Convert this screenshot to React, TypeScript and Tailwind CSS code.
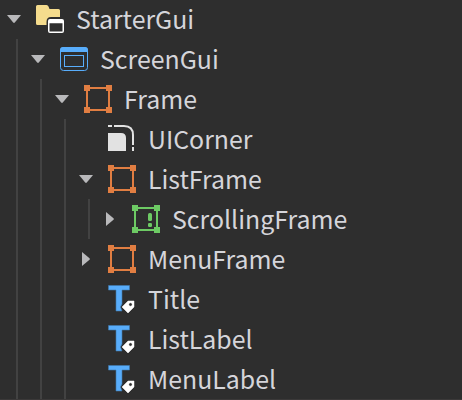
import type { ReactNode } from "react";

const FolderIcon = () => (
  <svg width="28" height="28" viewBox="0 0 28 28">
    <path d="M1.5 0H10.5Q12 0 12.5 1.5L13.5 4H22.5Q24 4 24 5.5V12H15Q10.5 12 10.5 17V20H1.5Q0 20 0 18.5V1.5Q0 0 1.5 0Z" fill="#f5dc8d" />
    <path fillRule="evenodd" d="M14 14H26Q28 14 28 16V26Q28 28 26 28H14Q12 28 12 26V16Q12 14 14 14ZM13.5 18.2V26.5H26.5V18.2Z" fill="#fff" />
  </svg>
);

const ScreenIcon = () => (
  <svg width="28" height="24" viewBox="0 0 28 24">
    <rect x=".5" y=".5" width="27" height="23" rx="3" fill="none" stroke="#58adfb" />
    <path d="M0 5V3Q0 0 3 0H25Q28 0 28 3V5Z" fill="#58adfb" />
    <rect x="4.5" y="8.5" width="19" height="11" fill="none" stroke="#58adfb" />
  </svg>
);

const FrameIcon = ({ color, bar }: { color: string; bar?: boolean }) => (
  <svg width="28" height="28" viewBox="0 0 28 28" fill={color} shapeRendering="crispEdges">
    <rect x="3" y="3" width="22" height="22" fill="none" stroke={color} strokeWidth="2" />
    <path d="M0 0H6V6H0ZM22 0H28V6H22ZM0 22H6V28H0ZM22 22H28V28H22Z" />
    {bar && <g shapeRendering="auto"><rect x="16" y="8" width="4" height="8" rx="1.5" /><rect x="16" y="18" width="4" height="4" rx="1.2" /></g>}
  </svg>
);

const CornerIcon = () => (
  <svg width="28" height="28" viewBox="0 0 28 28">
    <path d="M0 8H13Q18 8 18 13V26H0Z" fill="#e2e2e2" />
    <path d="M0 1H4M6 1H16Q25 1 25 10V20M25 22V26" fill="none" stroke="#e2e2e2" strokeWidth="2" />
  </svg>
);

const LabelIcon = () => (
  <svg width="28" height="28" viewBox="0 0 28 28">
    <path d="M.5 .5H21.5V5H14V19L12.5 22L14 26H8V5H.5Z" fill="#58adfb" stroke="#3f79ac" strokeWidth=".6" />
    <path fillRule="evenodd" d="M14 22L20 16H26V22L20 28ZM22.5 17.8A1.7 1.7 0 1 0 22.5 21.2A1.7 1.7 0 1 0 22.5 17.8Z" fill="#fff" stroke="#fff" strokeWidth=".5" strokeLinejoin="round" />
  </svg>
);

type NodeProps = { name: string; icon: ReactNode; state?: "open" | "closed"; children?: ReactNode };

const TreeNode = ({ name, icon, state, children }: NodeProps) => (
  <div>
    <div className="flex h-10 items-center">
      <div className="flex w-7 shrink-0 justify-center">
        {state && (
          <svg width="14" height="14" viewBox="0 0 14 14" fill="#b9b9bb">
            {state === "open" ? <path d="M0 3H14L7.8 10.5Q7 11.3 6.2 10.5Z" /> : <path d="M3 0L10.5 6.2Q11.3 7 10.5 7.8L3 14Z" />}
          </svg>
        )}
      </div>
      <div className="ml-2 flex h-7 w-7 shrink-0 items-center justify-center">{icon}</div>
      <span className="ml-3 whitespace-nowrap pb-0.5 leading-[38px]">{name}</span>
    </div>
    {children && <div className="ml-4 border-l-2 border-[#424242] pl-1.5">{children}</div>}
  </div>
);

export default function App() {
  return (
    <div className="h-[400px] w-[462px] overflow-hidden bg-[#2e2e2e] font-['Noto_Sans_CJK_SC',sans-serif] text-[24.9px] text-[#d5d5da]">
      <div className="-mt-px border-b-2 border-[#3b3939]">
        <TreeNode name="StarterGui" icon={<FolderIcon />} state="open">
          <TreeNode name="ScreenGui" icon={<ScreenIcon />} state="open">
            <TreeNode name="Frame" icon={<FrameIcon color="#e17e42" />} state="open">
              <TreeNode name="UICorner" icon={<CornerIcon />} />
              <TreeNode name="ListFrame" icon={<FrameIcon color="#e17e42" />} state="open">
                <TreeNode name="ScrollingFrame" icon={<FrameIcon color="#6dca64" bar />} state="closed" />
              </TreeNode>
              <TreeNode name="MenuFrame" icon={<FrameIcon color="#e17e42" />} state="closed" />
              <TreeNode name="Title" icon={<LabelIcon />} />
              <TreeNode name="ListLabel" icon={<LabelIcon />} />
              <TreeNode name="MenuLabel" icon={<LabelIcon />} />
            </TreeNode>
          </TreeNode>
        </TreeNode>
      </div>
    </div>
  );
}
